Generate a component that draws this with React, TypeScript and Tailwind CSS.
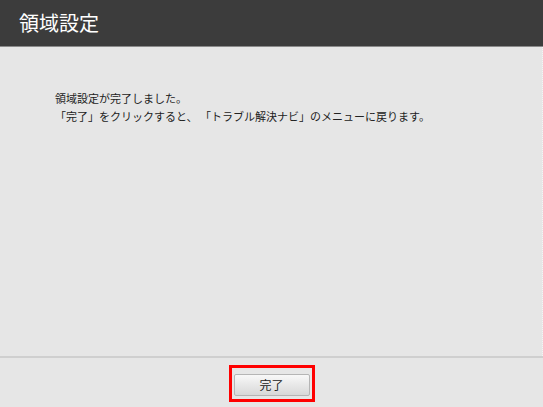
export default function App() {
  return (
    <div
      className="flex h-[407px] w-[543px] flex-col bg-[#e6e6e6]"
      style={{ fontFamily: '"Noto Sans CJK JP", "MS PGothic", sans-serif' }}
    >
      <header className="flex h-[47px] shrink-0 items-center border-b border-[#8a8a8a] bg-[#3c3c3c] pl-[19px]">
        <h1 className="text-[20px] leading-none text-white">領域設定</h1>
      </header>
      <main className="flex-1 border-r border-dotted border-[#f4f4f4] pl-[55px] pt-[42px] text-[11px] leading-[18px] text-[#222]">
        <p>領域設定が完了しました。</p>
        <p>「完了」をクリックすると、 「トラブル解決ナビ」のメニューに戻ります。</p>
      </main>
      <footer className="flex h-[51px] shrink-0 items-start justify-center border-t-2 border-[#cfcfcf] pt-[7px]">
        <div className="border-[3px] border-[#ff0000] px-[2px] py-[3px]">
          <button className="h-[22px] w-[76px] rounded-[2px] border border-[#b5b5b5] bg-gradient-to-b from-[#f8f8f8] to-[#d8d8d8] text-[12px] leading-none text-[#222]">
            完了
          </button>
        </div>
      </footer>
    </div>
  );
}
